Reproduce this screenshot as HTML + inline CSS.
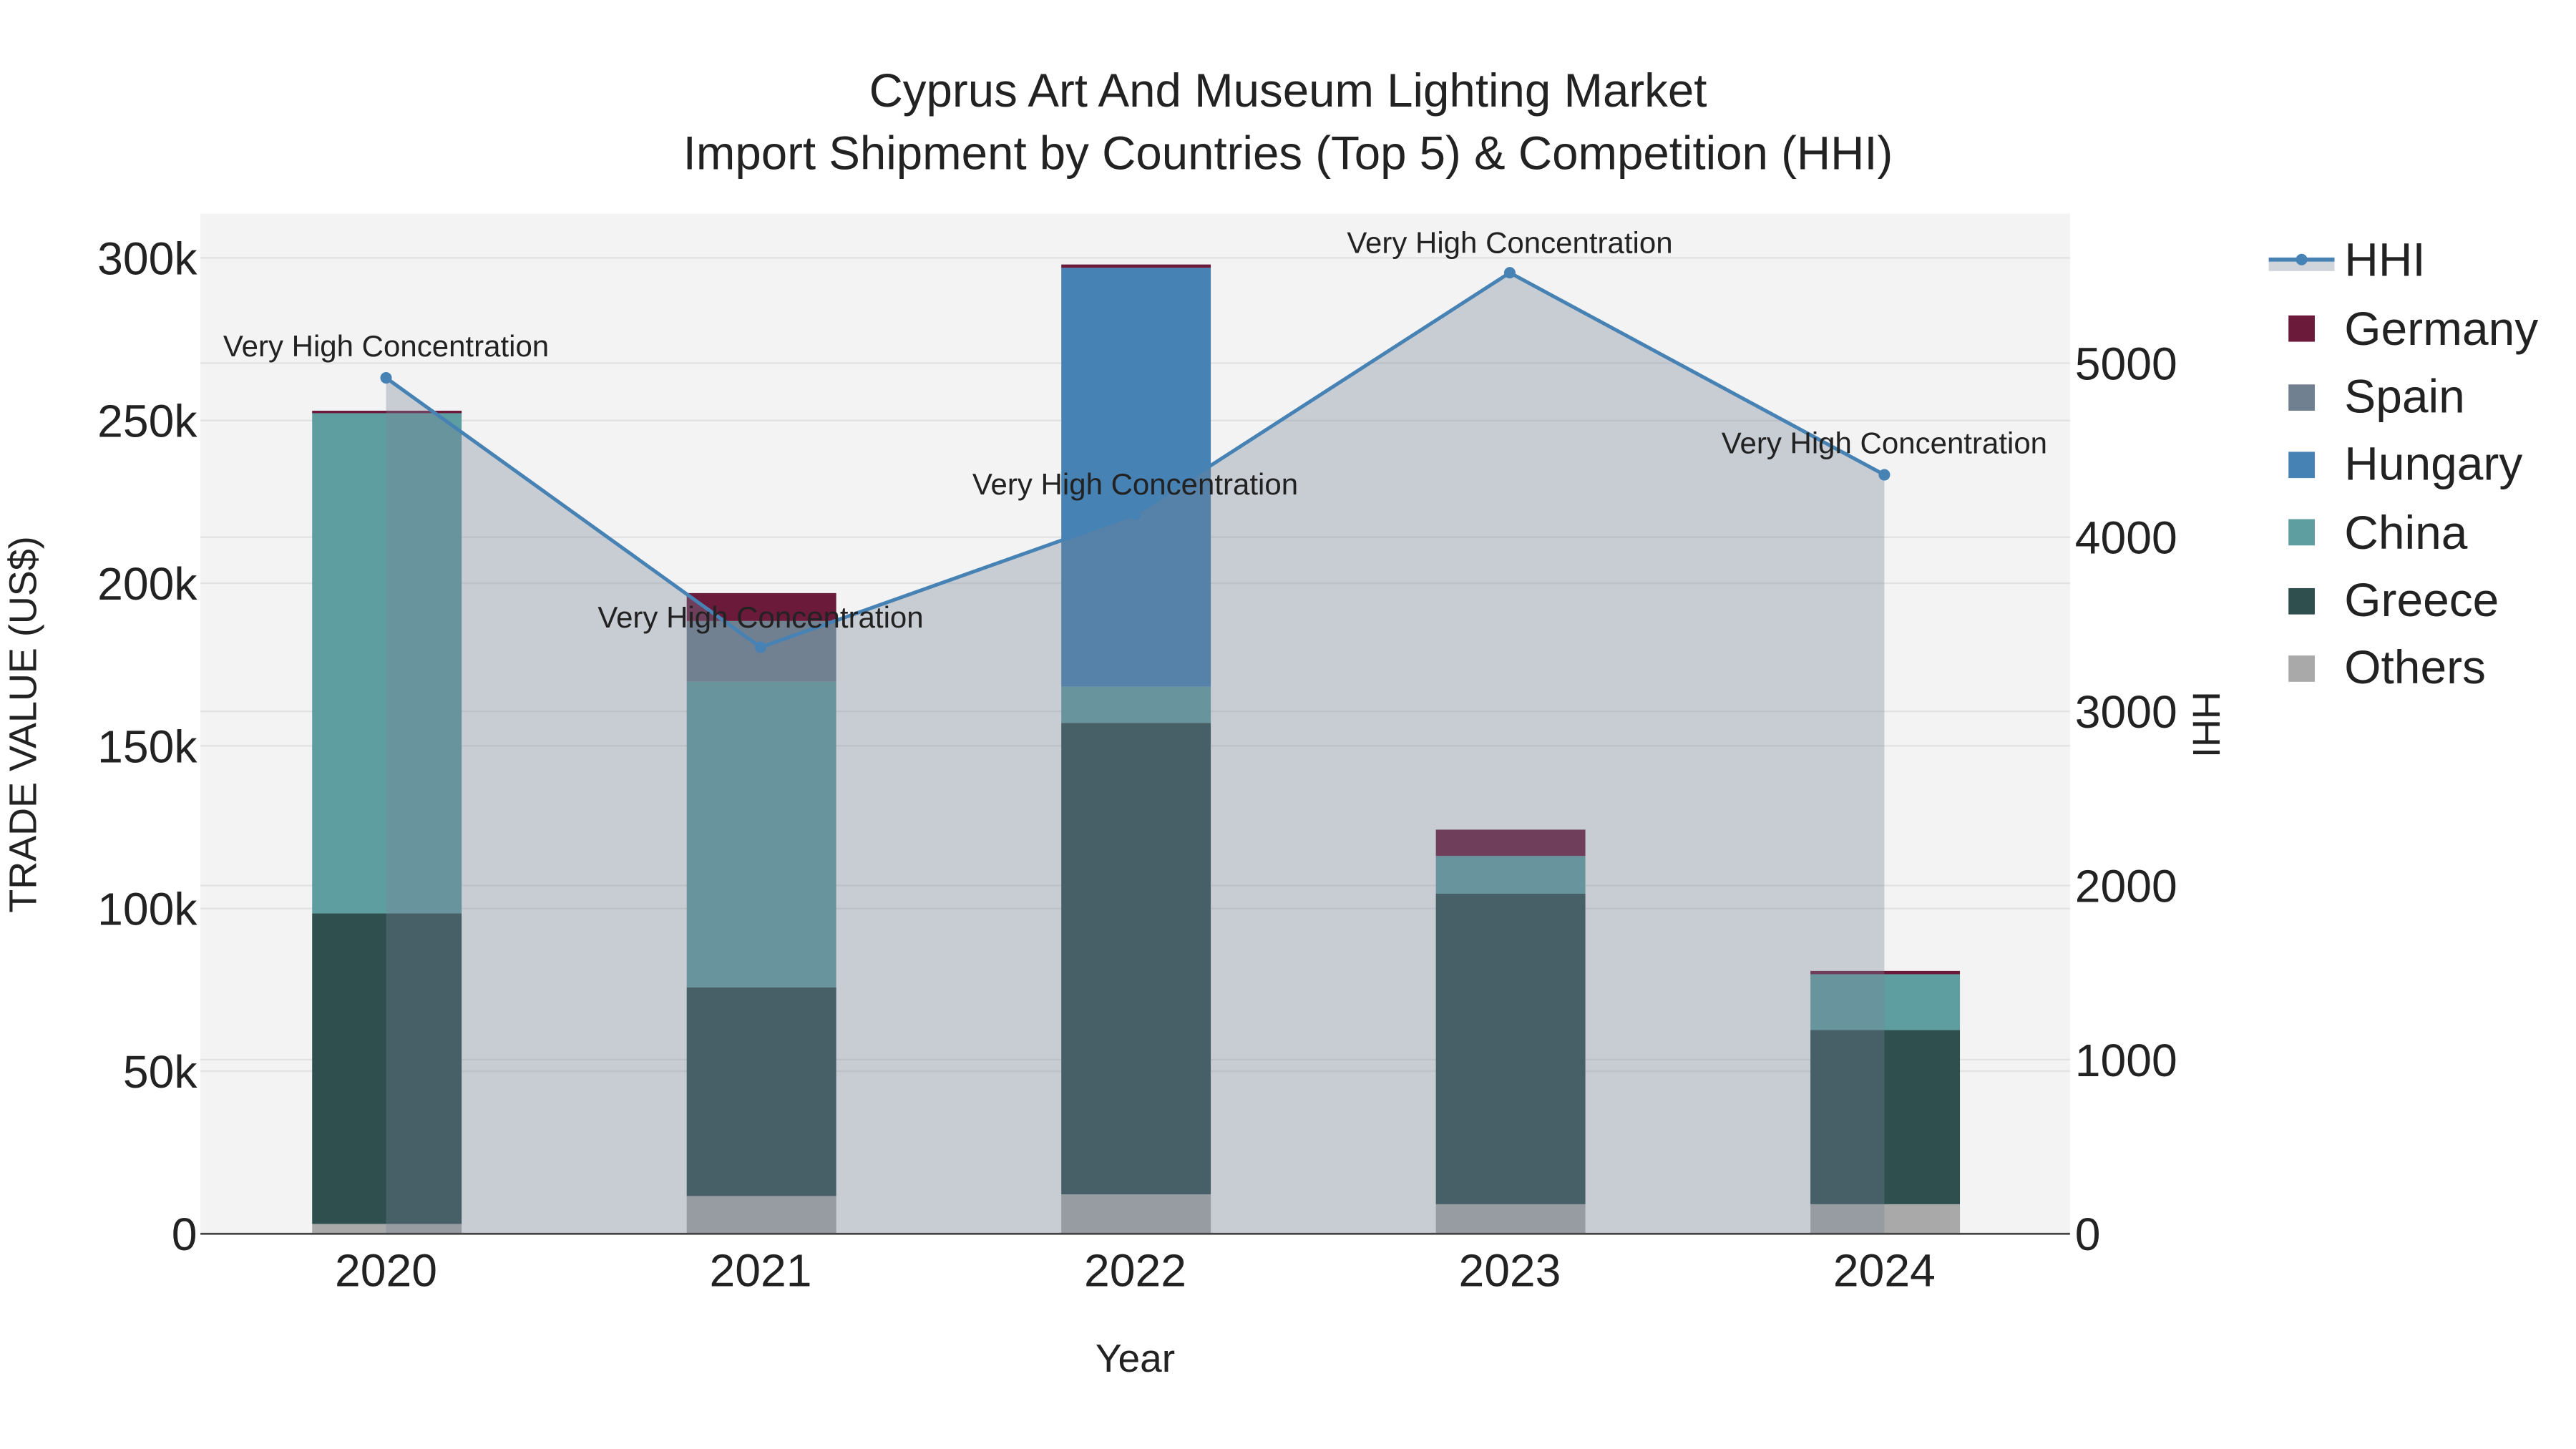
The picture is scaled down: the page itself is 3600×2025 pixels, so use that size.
<!DOCTYPE html>
<html><head><meta charset="utf-8"><style>
html,body{margin:0;padding:0;background:#fff;}
svg{display:block;}
text{font-family:"Liberation Sans",sans-serif;fill:#222;}
</style></head><body>
<svg width="3600" height="2025" viewBox="0 0 1568 882" xmlns="http://www.w3.org/2000/svg">
<rect x="0" y="0" width="1568" height="882" fill="#fff"/>
<rect x="122" y="130" width="1138" height="621" fill="#f3f3f3"/>
<g stroke="#e2e2e2" stroke-width="1">
<line x1="122" x2="1260" y1="157" y2="157"/><line x1="122" x2="1260" y1="256" y2="256"/>
<line x1="122" x2="1260" y1="355" y2="355"/><line x1="122" x2="1260" y1="454" y2="454"/>
<line x1="122" x2="1260" y1="553" y2="553"/><line x1="122" x2="1260" y1="652" y2="652"/>
<line x1="122" x2="1260" y1="221" y2="221"/><line x1="122" x2="1260" y1="327" y2="327"/>
<line x1="122" x2="1260" y1="433" y2="433"/><line x1="122" x2="1260" y1="539" y2="539"/>
<line x1="122" x2="1260" y1="645" y2="645"/>
</g>
<g>
<rect x="190" y="745" width="91" height="6" fill="#a9a9a9"/>
<rect x="190" y="556" width="91" height="189" fill="#2f4f4f"/>
<rect x="190" y="251" width="91" height="305" fill="#5f9ea0"/>
<rect x="190" y="250" width="91" height="1.5" fill="#6b1a3a"/>

<rect x="418" y="728" width="91" height="23" fill="#a9a9a9"/>
<rect x="418" y="601" width="91" height="127" fill="#2f4f4f"/>
<rect x="418" y="415" width="91" height="186" fill="#5f9ea0"/>
<rect x="418" y="378" width="91" height="37" fill="#708090"/>
<rect x="418" y="361" width="91" height="17" fill="#6b1a3a"/>

<rect x="646" y="727" width="91" height="24" fill="#a9a9a9"/>
<rect x="646" y="440" width="91" height="287" fill="#2f4f4f"/>
<rect x="646" y="418" width="91" height="22" fill="#5f9ea0"/>
<rect x="646" y="163" width="91" height="255" fill="#4682b4"/>
<rect x="646" y="161" width="91" height="2" fill="#6b1a3a"/>

<rect x="874" y="733" width="91" height="18" fill="#a9a9a9"/>
<rect x="874" y="544" width="91" height="189" fill="#2f4f4f"/>
<rect x="874" y="521" width="91" height="23" fill="#5f9ea0"/>
<rect x="874" y="505" width="91" height="16" fill="#6b1a3a"/>

<rect x="1102" y="733" width="91" height="18" fill="#a9a9a9"/>
<rect x="1102" y="627" width="91" height="106" fill="#2f4f4f"/>
<rect x="1102" y="593" width="91" height="34" fill="#5f9ea0"/>
<rect x="1102" y="591" width="91" height="2" fill="#6b1a3a"/>
</g>
<polygon points="235,751 235,230 463,394 691,313 919,166 1147,289 1147,751" fill="rgba(118,130,150,0.345)"/>
<polyline points="235,230 463,394 691,313 919,166 1147,289" fill="none" stroke="#4682b4" stroke-width="2.2"/>
<g fill="#4682b4">
<circle cx="235" cy="230" r="3.5"/><circle cx="463" cy="394" r="3.5"/><circle cx="691" cy="313" r="3.5"/><circle cx="919" cy="166" r="3.5"/><circle cx="1147" cy="289" r="3.5"/>
</g>
<line x1="122" x2="1260" y1="751" y2="751" stroke="#444" stroke-width="1.2"/>
<g font-size="18.3" text-anchor="middle">
<text x="235" y="217">Very High Concentration</text>
<text x="463" y="382">Very High Concentration</text>
<text x="691" y="301">Very High Concentration</text>
<text x="919" y="154">Very High Concentration</text>
<text x="1147" y="276">Very High Concentration</text>
</g>
<g font-size="28.5" text-anchor="middle">
<text x="784" y="65">Cyprus Art And Museum Lighting Market</text>
<text x="784" y="103">Import Shipment by Countries (Top 5) &amp; Competition (HHI)</text>
</g>
<g font-size="28" text-anchor="end">
<text x="120" y="167">300k</text><text x="120" y="266">250k</text><text x="120" y="365">200k</text>
<text x="120" y="464">150k</text><text x="120" y="563">100k</text><text x="120" y="662">50k</text>
<text x="120" y="761">0</text>
</g>
<g font-size="28" text-anchor="start">
<text x="1263" y="231">5000</text><text x="1263" y="337">4000</text><text x="1263" y="443">3000</text>
<text x="1263" y="549">2000</text><text x="1263" y="655">1000</text><text x="1263" y="761">0</text>
</g>
<g font-size="28" text-anchor="middle">
<text x="235" y="783">2020</text><text x="463" y="783">2021</text><text x="691" y="783">2022</text>
<text x="919" y="783">2023</text><text x="1147" y="783">2024</text>
</g>
<text x="691" y="835" font-size="24" text-anchor="middle">Year</text>
<text transform="translate(22,441) rotate(-90)" font-size="23.5" text-anchor="middle">TRADE VALUE (US$)</text>
<text transform="translate(1335,441) rotate(90)" font-size="23.5" text-anchor="middle">HHI</text>
<rect x="1381" y="157" width="40" height="8" fill="rgba(118,130,150,0.345)"/>
<line x1="1381" x2="1421" y1="158" y2="158" stroke="#4682b4" stroke-width="2.5"/>
<circle cx="1401" cy="158" r="3.5" fill="#4682b4"/>
<g font-size="28.7">
<text x="1427" y="168">HHI</text>
<rect x="1393" y="192" width="16" height="16" fill="#6b1a3a"/><text x="1427" y="210">Germany</text>
<rect x="1393" y="234" width="16" height="16" fill="#708090"/><text x="1427" y="251">Spain</text>
<rect x="1393" y="275" width="16" height="16" fill="#4682b4"/><text x="1427" y="292">Hungary</text>
<rect x="1393" y="316" width="16" height="16" fill="#5f9ea0"/><text x="1427" y="334">China</text>
<rect x="1393" y="358" width="16" height="16" fill="#2f4f4f"/><text x="1427" y="375">Greece</text>
<rect x="1393" y="399" width="16" height="16" fill="#a9a9a9"/><text x="1427" y="416">Others</text>
</g>
</svg>
</body></html>
